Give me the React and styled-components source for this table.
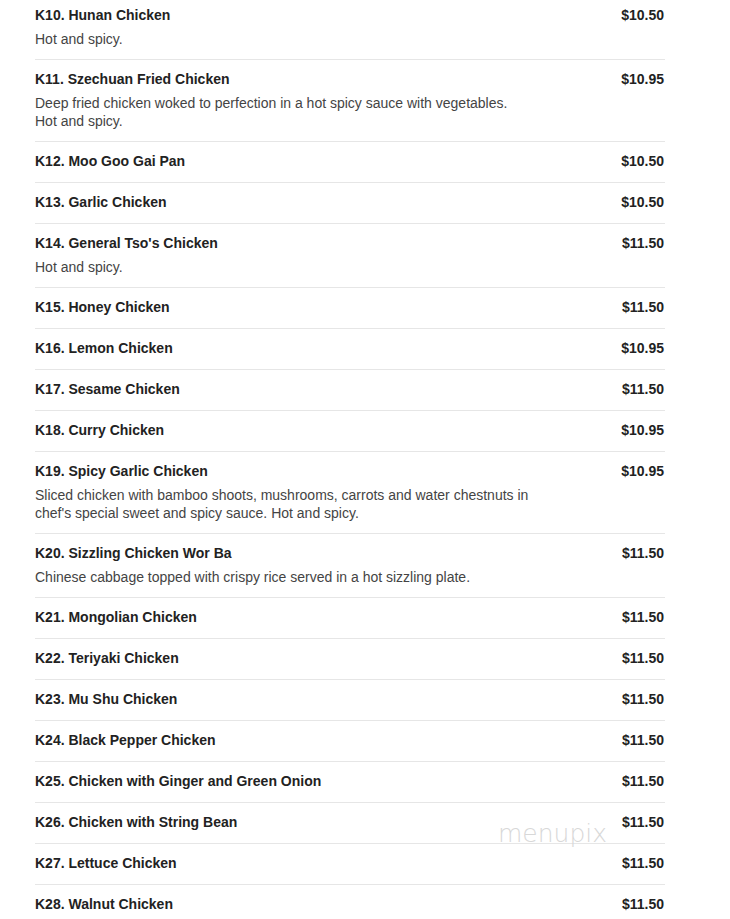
import styled, { createGlobalStyle } from "styled-components";

const GlobalStyle = createGlobalStyle`
  body {
    margin: 0;
    background: #fff;
    font-family: "Liberation Sans", Arial, sans-serif;
  }
`;

const Page = styled.div`
  position: relative;
  width: 630px;
  margin: -4px 0 0 35px;
`;

const Item = styled.div`
  padding: 9px 0 11px;
  border-bottom: 1px solid #e6e6e6;
`;

const Head = styled.div`
  display: flex;
  justify-content: space-between;
  align-items: baseline;
`;

const Name = styled.div`
  font-size: 14px;
  font-weight: bold;
  line-height: 20px;
  color: #222;
`;

const Price = styled.div`
  font-size: 14px;
  font-weight: bold;
  line-height: 20px;
  color: #222;
  padding-right: 1px;
`;

const Desc = styled.div`
  margin-top: 5px;
  font-size: 14px;
  line-height: 18px;
  color: #444;
`;

const Watermark = styled.div`
  position: absolute;
  left: 463px;
  top: 823px;
  font-family: "DejaVu Sans", sans-serif;
  font-weight: 200;
  font-size: 25px;
  color: #d8d8d8;
  pointer-events: none;
`;

const items = [
  ["K10. Hunan Chicken", "$10.50", ["Hot and spicy."]],
  [
    "K11. Szechuan Fried Chicken",
    "$10.95",
    [
      "Deep fried chicken woked to perfection in a hot spicy sauce with vegetables.",
      "Hot and spicy.",
    ],
  ],
  ["K12. Moo Goo Gai Pan", "$10.50"],
  ["K13. Garlic Chicken", "$10.50"],
  ["K14. General Tso's Chicken", "$11.50", ["Hot and spicy."]],
  ["K15. Honey Chicken", "$11.50"],
  ["K16. Lemon Chicken", "$10.95"],
  ["K17. Sesame Chicken", "$11.50"],
  ["K18. Curry Chicken", "$10.95"],
  [
    "K19. Spicy Garlic Chicken",
    "$10.95",
    [
      "Sliced chicken with bamboo shoots, mushrooms, carrots and water chestnuts in",
      "chef's special sweet and spicy sauce. Hot and spicy.",
    ],
  ],
  [
    "K20. Sizzling Chicken Wor Ba",
    "$11.50",
    ["Chinese cabbage topped with crispy rice served in a hot sizzling plate."],
  ],
  ["K21. Mongolian Chicken", "$11.50"],
  ["K22. Teriyaki Chicken", "$11.50"],
  ["K23. Mu Shu Chicken", "$11.50"],
  ["K24. Black Pepper Chicken", "$11.50"],
  ["K25. Chicken with Ginger and Green Onion", "$11.50"],
  ["K26. Chicken with String Bean", "$11.50"],
  ["K27. Lettuce Chicken", "$11.50"],
  ["K28. Walnut Chicken", "$11.50"],
];

const App = () => {
  return (
    <Page>
      <GlobalStyle />
      {items.map(([name, price, desc]) => (
        <Item key={name}>
          <Head>
            <Name>{name}</Name>
            <Price>{price}</Price>
          </Head>
          {desc && (
            <Desc>
              {desc.map((line) => (
                <div key={line}>{line}</div>
              ))}
            </Desc>
          )}
        </Item>
      ))}
      <Watermark>menupix</Watermark>
    </Page>
  );
};

export default App;
